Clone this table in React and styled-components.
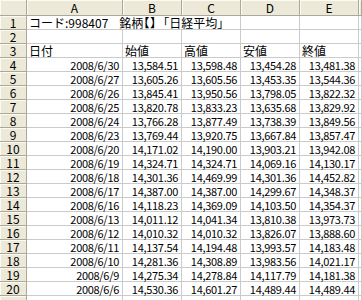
import React from "react";
import styled, { createGlobalStyle } from "styled-components";

const Global = createGlobalStyle`
  html, body { margin: 0; padding: 0; background: #fff; overflow: hidden; }
  body { font-family: "Noto Sans CJK JP", "Noto Sans", sans-serif; }
`;

const Sheet = styled.div`
  display: grid;
  grid-template-columns: 27px 96px 59px 59px 59px 59px 1fr;
  grid-auto-rows: 14px;
  grid-template-rows: 16px;
  width: 362px;
  height: 300px;
  overflow: hidden;
  font-size: 11px;
  color: #000;
`;

const Head = styled.div`
  box-sizing: border-box;
  background: #ece9d8;
  border-right: 1px solid #aca899;
  border-bottom: 1px solid #aca899;
  box-shadow: inset 1px 1px 0 #fbfaf4;
  display: flex;
  align-items: center;
  justify-content: center;
  font-size: 12px;
  line-height: 12px;
`;

const Cell = styled.div`
  box-sizing: border-box;
  border-right: 1px solid #cbcbcb;
  border-bottom: 1px solid #cbcbcb;
  display: flex;
  align-items: center;
  justify-content: ${(p) => (p.$right ? "flex-end" : "flex-start")};
  padding: ${(p) => (p.$right ? "0 3px 0 0" : "0 0 0 2px")};
  white-space: nowrap;
  line-height: 12px;
  font-size: ${(p) => (p.$big ? "12px" : "11px")};
  letter-spacing: ${(p) => (p.$right ? "-0.3px" : "0")};
  grid-column: ${(p) => (p.$span ? `span ${p.$span}` : "auto")};
`;

const Narrow = styled.span`
  font-feature-settings: "palt";
  letter-spacing: 1px;
`;

const Gap = styled.span`
  display: inline-block;
  width: ${(p) => p.$w}px;
`;

const data = [
  ["2008/6/30", "13,584.51", "13,598.48", "13,454.28", "13,481.38"],
  ["2008/6/27", "13,605.26", "13,605.56", "13,453.35", "13,544.36"],
  ["2008/6/26", "13,845.41", "13,950.56", "13,798.05", "13,822.32"],
  ["2008/6/25", "13,820.78", "13,833.23", "13,635.68", "13,829.92"],
  ["2008/6/24", "13,766.28", "13,877.49", "13,738.39", "13,849.56"],
  ["2008/6/23", "13,769.44", "13,920.75", "13,667.84", "13,857.47"],
  ["2008/6/20", "14,171.02", "14,190.00", "13,903.21", "13,942.08"],
  ["2008/6/19", "14,324.71", "14,324.71", "14,069.16", "14,130.17"],
  ["2008/6/18", "14,301.36", "14,469.99", "14,301.36", "14,452.82"],
  ["2008/6/17", "14,387.00", "14,387.00", "14,299.67", "14,348.37"],
  ["2008/6/16", "14,118.23", "14,369.09", "14,103.50", "14,354.37"],
  ["2008/6/13", "14,011.12", "14,041.34", "13,810.38", "13,973.73"],
  ["2008/6/12", "14,010.32", "14,010.32", "13,826.07", "13,888.60"],
  ["2008/6/11", "14,137.54", "14,194.48", "13,993.57", "14,183.48"],
  ["2008/6/10", "14,281.36", "14,308.89", "13,983.56", "14,021.17"],
  ["2008/6/9", "14,275.34", "14,278.84", "14,117.79", "14,181.38"],
  ["2008/6/6", "14,530.36", "14,601.27", "14,489.44", "14,489.44"],
];

const cols = ["", "A", "B", "C", "D", "E", ""];
const labels = ["日付", "始値", "高値", "安値", "終値"];

export default function App() {
  return (
    <>
      <Global />
      <Sheet>
        {cols.map((c, i) => (
          <Head key={"h" + i}>{c}</Head>
        ))}

        <Head>1</Head>
        <Cell $span={3} $big>
          コード:998407
          <Gap $w={11} />
          銘柄<Narrow>【】</Narrow>「日経平均」
        </Cell>
        <Cell />
        <Cell />
        <Cell />

        <Head>2</Head>
        {[0, 1, 2, 3, 4, 5].map((i) => (
          <Cell key={"r2" + i} />
        ))}

        <Head>3</Head>
        {labels.map((l) => (
          <Cell key={l} $big>
            {l}
          </Cell>
        ))}
        <Cell />

        {data.map((row, r) => (
          <React.Fragment key={"r" + r}>
            <Head>{r + 4}</Head>
            {row.map((v, i) => (
              <Cell key={i} $right>
                {v}
              </Cell>
            ))}
            <Cell />
          </React.Fragment>
        ))}

        <Head />
        {[0, 1, 2, 3, 4, 5].map((i) => (
          <Cell key={"r21" + i} />
        ))}
      </Sheet>
    </>
  );
}
